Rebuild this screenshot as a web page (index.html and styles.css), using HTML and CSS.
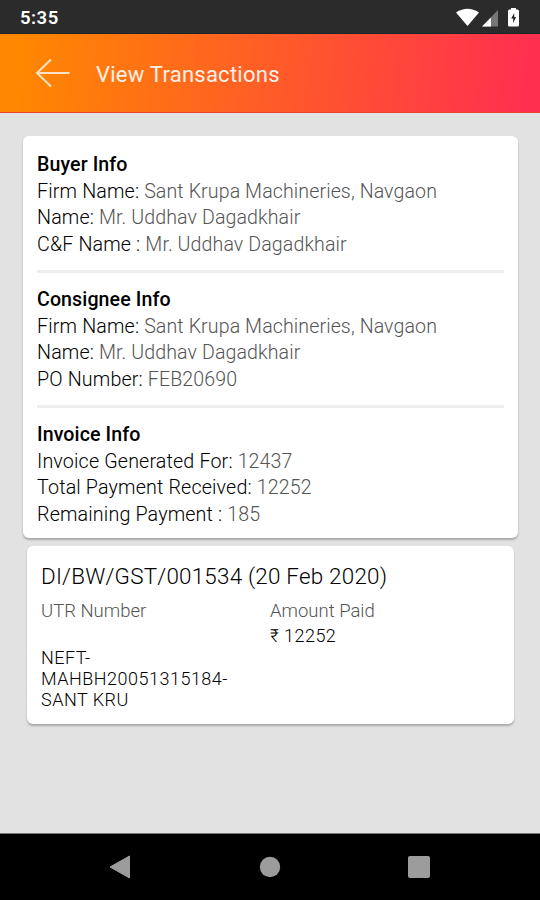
FILE: index.html
```html
<!DOCTYPE html>
<html lang="en">
<head>
    <meta charset="UTF-8">
    <meta name="viewport" content="width=device-width, initial-scale=1.0">
    <title>View Transactions</title>
    <link rel="stylesheet" href="styles.css">
</head>
<body>
    <div class="status-bar">
        <span class="clock">5:35</span>
        <svg class="status-icons" width="66" height="24" viewBox="0 0 66 24">
            <path d="M2 6.500 Q13.500 -1 25 6.500 L13.500 20 Z" fill="#fff"/>
            <path d="M28 20.500 L44 4 V20.500 Z" fill="#777"/>
            <path d="M28 20.500 L37 11.500 V20.500 Z" fill="#fff"/>
            <path d="M57 3.500 V2 H62 V3.500 H63.500 Q65 3.500 65 5 V19 Q65 20.500 63.500 20.500 H55.500 Q54 20.500 54 19 V5 Q54 3.500 55.500 3.500 Z" fill="#fff"/>
            <path d="M60.200 7 L57.200 12.500 H59.200 V17 L62 11 H60.200 Z" fill="#222"/>
        </svg>
    </div>

    <header class="toolbar">
        <svg class="back" width="36" height="32" viewBox="0 0 36 32">
            <path d="M16 2.500 L2 16 L16 29.500 M2 16 H34.500" fill="none" stroke="#ffe3c8" stroke-width="1.9"/>
        </svg>
        <h1>View Transactions</h1>
    </header>

    <main class="content">
        <div class="card info-card">
            <section class="info">
                <h2>Buyer Info</h2>
                <p>Firm Name: <span>Sant Krupa Machineries, Navgaon</span></p>
                <p>Name: <span>Mr. Uddhav Dagadkhair</span></p>
                <p>C&amp;F Name : <span>Mr. Uddhav Dagadkhair</span></p>
            </section>
            <section class="info">
                <h2>Consignee Info</h2>
                <p>Firm Name: <span>Sant Krupa Machineries, Navgaon</span></p>
                <p>Name: <span>Mr. Uddhav Dagadkhair</span></p>
                <p>PO Number: <span>FEB20690</span></p>
            </section>
            <section class="info">
                <h2>Invoice Info</h2>
                <p>Invoice Generated For: <span>12437</span></p>
                <p>Total Payment Received: <span>12252</span></p>
                <p>Remaining Payment : <span>185</span></p>
            </section>
        </div>

        <div class="card payment-card">
            <h3>DI/BW/GST/001534 (20 Feb 2020)</h3>
            <div class="columns">
                <div class="column">
                    <div class="label">UTR Number</div>
                    <div class="utr">NEFT-<br>MAHBH20051315184-<br>SANT KRU</div>
                </div>
                <div class="column">
                    <div class="label">Amount Paid</div>
                    <div class="amount">₹ 12252</div>
                </div>
            </div>
        </div>
    </main>

    <nav class="nav-bar">
        <svg width="24" height="26" viewBox="0 0 24 26"><path d="M2 13 L21.500 2 V24 Z" fill="#9c9c9c" stroke="#9c9c9c" stroke-linejoin="round"/></svg>
        <svg width="24" height="26" viewBox="0 0 24 26"><circle cx="12" cy="13" r="10.200" fill="#9c9c9c"/></svg>
        <svg width="24" height="26" viewBox="0 0 24 26"><rect x="1" y="2" width="22" height="22" rx="2" fill="#9c9c9c"/></svg>
    </nav>
</body>
</html>
```
FILE: styles.css
```css
* {
    box-sizing: border-box;
}

body {
    font-family: Roboto, sans-serif;
    background-color: #e2e2e2;
    margin: 0;
    height: 900px;
    display: flex;
    flex-direction: column;
    overflow: hidden;
}

h1, h2, h3, p {
    margin: 0;
}

.status-bar {
    height: 34px;
    background-color: #2b2b2b;
    border-bottom: 1px solid #1c262b;
    color: #fff;
    display: flex;
    justify-content: space-between;
    padding: 6px 20px 0 20px;
}

.clock {
    font-size: 18.5px;
    font-weight: 600;
    line-height: 25px;
    letter-spacing: 0.5px;
}

.toolbar {
    height: 79px;
    background: linear-gradient(95deg, #ff8800 3%, #ff304f 97%);
    display: flex;
    align-items: center;
    padding-left: 35px;
    gap: 25px;
    border-bottom: 1px solid #e8452f;
}

h1 {
    color: #fff0e8;
    font-size: 22px;
    font-weight: 400;
    line-height: 28px;
    letter-spacing: 0.25px;
    padding-top: 3px;
}

.content {
    flex: 1;
    padding: 23px 22px 0 23px;
}

.card {
    background-color: #fff;
    border-radius: 6px;
    box-shadow: 0 2px 2px rgba(0, 0, 0, 0.25);
}

.info-card {
    height: 402px;
    padding: 16px 14px 0;
}

.info {
    height: 135px;
    font-size: 19.7px;
    font-weight: 300;
    line-height: 26.7px;
    letter-spacing: 0.15px;
    color: #000;
}

.info::after {
    content: "";
    display: block;
    height: 3px;
    margin-top: 11px;
    background-color: #eee;
}

.info:last-child::after {
    display: none;
}

.info h2 {
    font-size: 19.6px;
    font-weight: 500;
    line-height: inherit;
    letter-spacing: 0.1px;
}

.info span {
    color: #555;
    font-size: 19.6px;
    letter-spacing: 0.1px;
}

.payment-card {
    height: 178px;
    margin: 8px 4px 0;
    padding: 16px 14px 0;
    color: #000;
}

h3 {
    font-size: 22.4px;
    font-weight: 300;
    line-height: 28px;
    letter-spacing: 0.23px;
}

.columns {
    display: grid;
    grid-template-columns: 229px 1fr;
    padding-top: 8px;
}

.label {
    font-size: 18.5px;
    line-height: 26px;
    font-weight: 300;
    color: #555;
}

.utr {
    margin-top: 23px;
    font-size: 18px;
    font-weight: 300;
    line-height: 21px;
    letter-spacing: 0.5px;
}

.amount {
    font-size: 18px;
    font-weight: 300;
    line-height: 24px;
    letter-spacing: 0.45px;
}

.nav-bar {
    height: 67px;
    background-color: #000;
    border-top: 1px solid #777;
    display: flex;
    justify-content: space-between;
    align-items: center;
    padding: 0 109px 0 108px;
}
```
